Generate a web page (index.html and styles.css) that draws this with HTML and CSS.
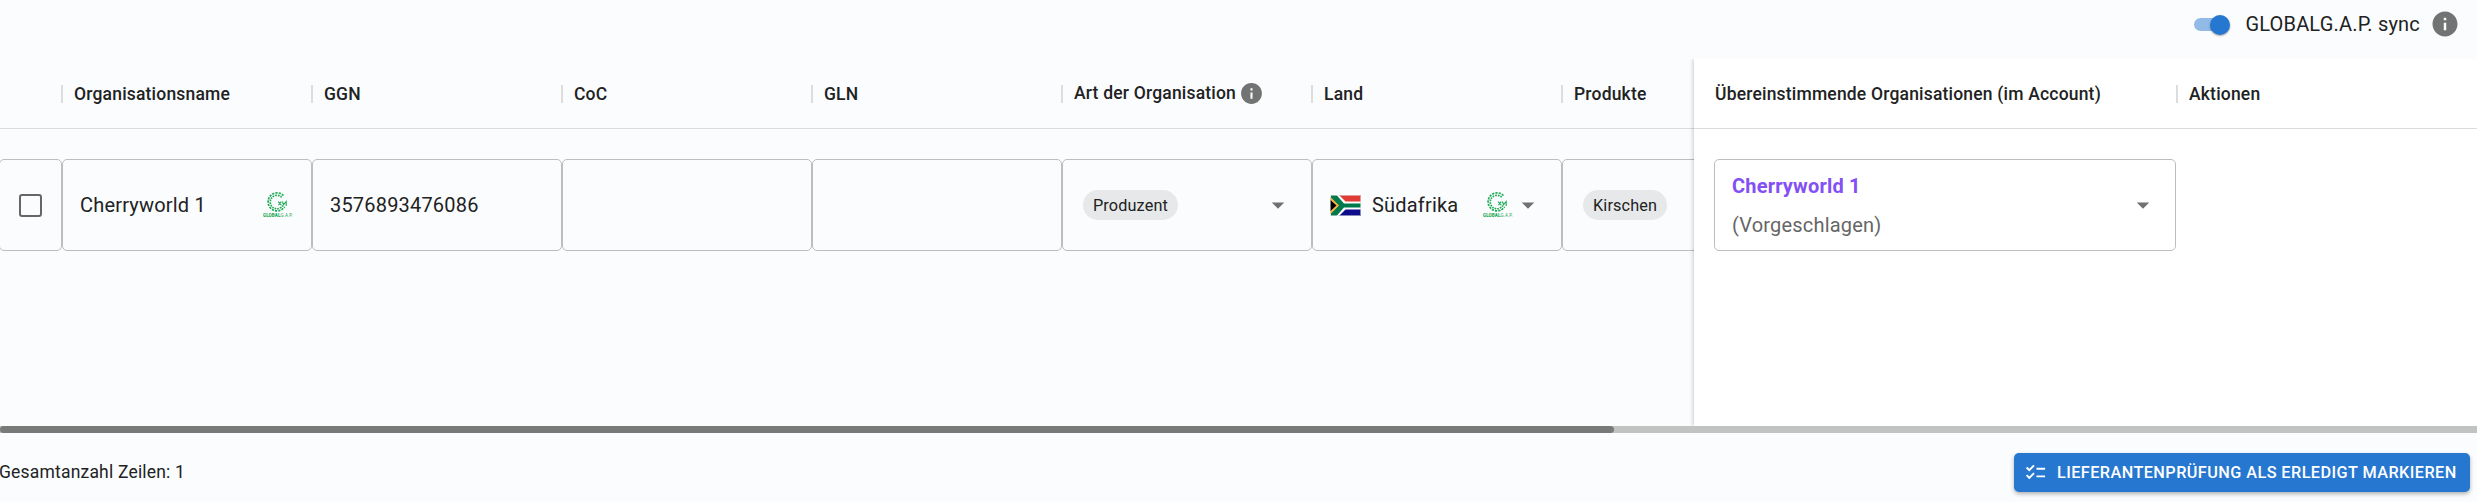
FILE: index.html
```html
<!DOCTYPE html>
<html lang="de">

<head>
    <meta charset="utf-8">
    <link rel="stylesheet" href="styles.css">
    <title>Lieferantenprüfung</title>
</head>

<body>
    <svg class="defs" width="0" height="0">
        <symbol id="info" viewBox="0 0 24 24">
            <path d="M12 2C6.480 2 2 6.480 2 12s4.480 10 10 10 10-4.480 10-10S17.520 2 12 2zm1 15h-2v-6h2v6zm0-8h-2V7h2v2z"/>
        </symbol>
        <symbol id="arrow" viewBox="0 0 24 24">
            <path d="M7 10l5 5 5-5z"/>
        </symbol>
        <symbol id="gap" viewBox="0 0 30 21">
            <g fill="none" stroke="#1faa55">
                <path d="M20.500 4.500A9 9 0 1 0 21.600 15.800" stroke-width="1.700" stroke-dasharray="2.200 1.100"/>
                <path d="M18.700 6.300A6.700 6.700 0 1 0 19.800 14.300" stroke-width="1.600" stroke-dasharray="1.700 .9"/>
                <path d="M15.200 10.600l3 3.600M18.300 10.600l-2.800 3.600M19.400 10.500l1.200 3.200 2.600-3.200v4.500" stroke-width="1.100"/>
            </g>
        </symbol>
    </svg>

    <div class="toolbar">
        <span class="switch"><span class="thumb"></span></span>
        <span class="sync-label">GLOBALG.A.P. sync</span>
        <svg class="info-lg"><use href="#info"/></svg>
    </div>

    <div class="grid">
        <div class="scroll-pane">
            <div class="header">
                <div class="th check"></div>
                <div class="th sep">Organisationsname</div>
                <div class="th sep">GGN</div>
                <div class="th sep">CoC</div>
                <div class="th sep">GLN</div>
                <div class="th sep art"><span>Art der Organisation</span><svg class="info-sm"><use href="#info"/></svg></div>
                <div class="th sep">Land</div>
                <div class="th sep">Produkte</div>
            </div>
            <div class="row">
                <div class="td check"><span class="checkbox"></span></div>
                <div class="td">
                    <span class="grow">Cherryworld 1</span>
                    <div class="logo">
                        <svg class="logo-mark"><use href="#gap"/></svg>
                        <div class="logo-text"><b>GLOBAL</b>G.A.P.</div>
                    </div>
                </div>
                <div class="td">3576893476086</div>
                <div class="td"></div>
                <div class="td"></div>
                <div class="td chips"><span class="chip">Produzent</span><svg class="arrow"><use href="#arrow"/></svg></div>
                <div class="td land">
                    <svg class="flag" viewBox="0 0 31 21">
                        <rect width="31" height="21" fill="#fff"/>
                        <path d="M9 0h22v6.500H15.500z" fill="#e03c35"/>
                        <path d="M9 21h22v-6.500H15.500z" fill="#0c0c8c"/>
                        <path d="M1 0h5.500L14 8.500H31v4H14L6.500 21H1z" fill="#00794d"/>
                        <path d="M0 1.500L9 10.500 0 19.500z" fill="#ffb547"/>
                        <path d="M0 4.500L6.500 10.500 0 16.500z" fill="#000"/>
                        <rect x=".5" y=".5" width="30" height="20" fill="none" stroke="#ddd" stroke-opacity=".6"/>
                    </svg>
                    <span class="grow">Südafrika</span>
                    <div class="logo">
                        <svg class="logo-mark"><use href="#gap"/></svg>
                        <div class="logo-text"><b>GLOBAL</b>G.A.P.</div>
                    </div>
                    <svg class="arrow"><use href="#arrow"/></svg>
                </div>
                <div class="td chips"><span class="chip">Kirschen</span></div>
            </div>
        </div>
        <div class="pinned">
            <div class="header">
                <div class="th match">Übereinstimmende Organisationen (im Account)</div>
                <div class="th sep">Aktionen</div>
            </div>
            <div class="row">
                <div class="td match">
                    <div class="grow">
                        <div class="match-name">Cherryworld 1</div>
                        <div class="match-hint">(Vorgeschlagen)</div>
                    </div>
                    <svg class="arrow"><use href="#arrow"/></svg>
                </div>
            </div>
        </div>
    </div>

    <div class="scrollbar"><div class="scroll-thumb"></div></div>

    <div class="footer">
        <span class="total">Gesamtanzahl Zeilen: 1</span>
        <button class="btn">
            <svg class="btn-icon" viewBox="0 0 24 24"><path d="M22 7h-9v2h9V7zm0 8h-9v2h9v-2zM5.540 11L2 7.460l1.410-1.410 2.120 2.120 4.240-4.240 1.410 1.410L5.540 11zm0 8L2 15.460l1.410-1.410 2.120 2.120 4.240-4.240 1.410 1.410L5.540 19z"/></svg>
            <span>LIEFERANTENPRÜFUNG ALS ERLEDIGT MARKIEREN</span>
        </button>
    </div>
</body>

</html>
```
FILE: styles.css
```css
* {
    box-sizing: border-box;
}

body {
    margin: 0;
    height: 502px;
    overflow: hidden;
    display: flex;
    flex-direction: column;
    background: #fbfcfe;
    color: #212222;
    font-family: Roboto, "Liberation Sans", sans-serif;
    font-size: 20px;
    letter-spacing: 0.19px;
}

svg {
    display: block;
    flex: none;
}

.defs {
    position: absolute;
}

.toolbar {
    height: 59px;
    display: flex;
    justify-content: flex-end;
    align-items: flex-start;
    padding: 9px 17px 0 0;
}

.switch {
    width: 34px;
    height: 13px;
    margin: 9px 17px 0 0;
    border-radius: 7px;
    background: #92bae7;
    display: flex;
    align-items: center;
    justify-content: flex-end;
}

.thumb {
    flex: none;
    width: 20px;
    height: 20px;
    margin-right: -2px;
    border-radius: 50%;
    background: #2677d0;
    box-shadow: 0 1px 2px rgba(0, 0, 0, 0.35);
}

.sync-label {
    line-height: 31px;
    margin-right: 10px;
}

.info-lg {
    width: 30px;
    height: 30px;
    fill: #727373;
}

.info-sm {
    width: 25px;
    height: 25px;
    margin: -1px 0 0 3px;
    fill: #727373;
}

.grid {
    height: 367px;
    display: flex;
}

.scroll-pane {
    width: 1694px;
    overflow: hidden;
}

.pinned {
    flex: 1;
    background: #fff;
    box-shadow: -1px 0 4px rgba(0, 0, 0, 0.2);
    clip-path: inset(0 0 0 -8px);
}

.header {
    height: 70px;
    display: flex;
    align-items: center;
    border-bottom: 1px solid #dadbdd;
}

.th {
    flex: none;
    width: 250px;
    height: 18px;
    padding-left: 12px;
    display: flex;
    align-items: center;
    font-size: 17.5px;
    font-weight: 500;
    white-space: nowrap;
}

.th.sep {
    border-left: 2px solid #dcdddf;
    padding-left: 11px;
    margin-left: -1px;
    margin-right: 1px;
}

.th.check {
    width: 62px;
}

.art span {
    margin-top: -2px;
}

.row {
    display: flex;
    padding-top: 30px;
}

.td {
    flex: none;
    width: 250px;
    height: 92px;
    padding: 0 18px 0 17px;
    border: 1px solid #bcbdbf;
    border-radius: 5px;
    display: flex;
    align-items: center;
    white-space: nowrap;
}

.td.check {
    width: 63px;
    margin-left: -1px;
    padding-left: 19px;
}

.checkbox {
    width: 23px;
    height: 23px;
    border: 2px solid #666;
    border-radius: 3px;
}

.grow {
    flex: 1;
}

.logo {
    width: 30px;
    height: 28px;
}

.logo-mark {
    width: 30px;
    height: 21px;
}

.logo-text {
    height: 7px;
    font-size: 4.5px;
    line-height: 7px;
    letter-spacing: 0.1px;
    color: #1faa55;
}

.logo-text b {
    font-weight: 900;
}

.td.chips {
    justify-content: space-between;
    padding: 0 18px 0 20px;
}

.chip {
    height: 30px;
    padding: 0 10px;
    border-radius: 15px;
    background: #e7e8ea;
    font-size: 16.25px;
    line-height: 31px;
    letter-spacing: 0.12px;
}

.arrow {
    width: 30px;
    height: 30px;
    fill: #707172;
}

.flag {
    width: 31px;
    height: 21px;
    margin-right: 11px;
}

.th.match {
    width: 463px;
    padding-left: 1px;
}

.pinned .header {
    padding-left: 20px;
}

.pinned .row {
    padding-left: 20px;
}

.td.match {
    width: 462px;
    padding-top: 2px;
    padding-right: 17px;
    line-height: 39px;
}

.match .arrow {
    margin-top: -2px;
}

.match-name {
    color: #8250f5;
    font-weight: 700;
}

.match-hint {
    color: #666;
}

.scrollbar {
    height: 7px;
    background: #c1c3c3;
}

.scroll-thumb {
    width: 1614px;
    height: 7px;
    border-radius: 4px;
    background: #787a7a;
}

.footer {
    flex: 1;
    display: flex;
    justify-content: space-between;
    align-items: flex-start;
    padding: 20px 7px 0 0;
}

.total {
    margin-left: -1px;
    font-size: 17.5px;
    line-height: 39px;
}

.btn {
    width: 456px;
    height: 39px;
    padding: 0 10px;
    border: 0;
    border-radius: 5px;
    display: flex;
    align-items: center;
    background: #2677d0;
    color: #fff;
    font-family: inherit;
    font-size: 16.25px;
    font-weight: 500;
    letter-spacing: 0.43px;
    white-space: nowrap;
    box-shadow: 0 2px 4px rgba(0, 0, 0, 0.3);
}

.btn-icon {
    width: 23px;
    height: 23px;
    margin-right: 10px;
    fill: #fff;
}
```
